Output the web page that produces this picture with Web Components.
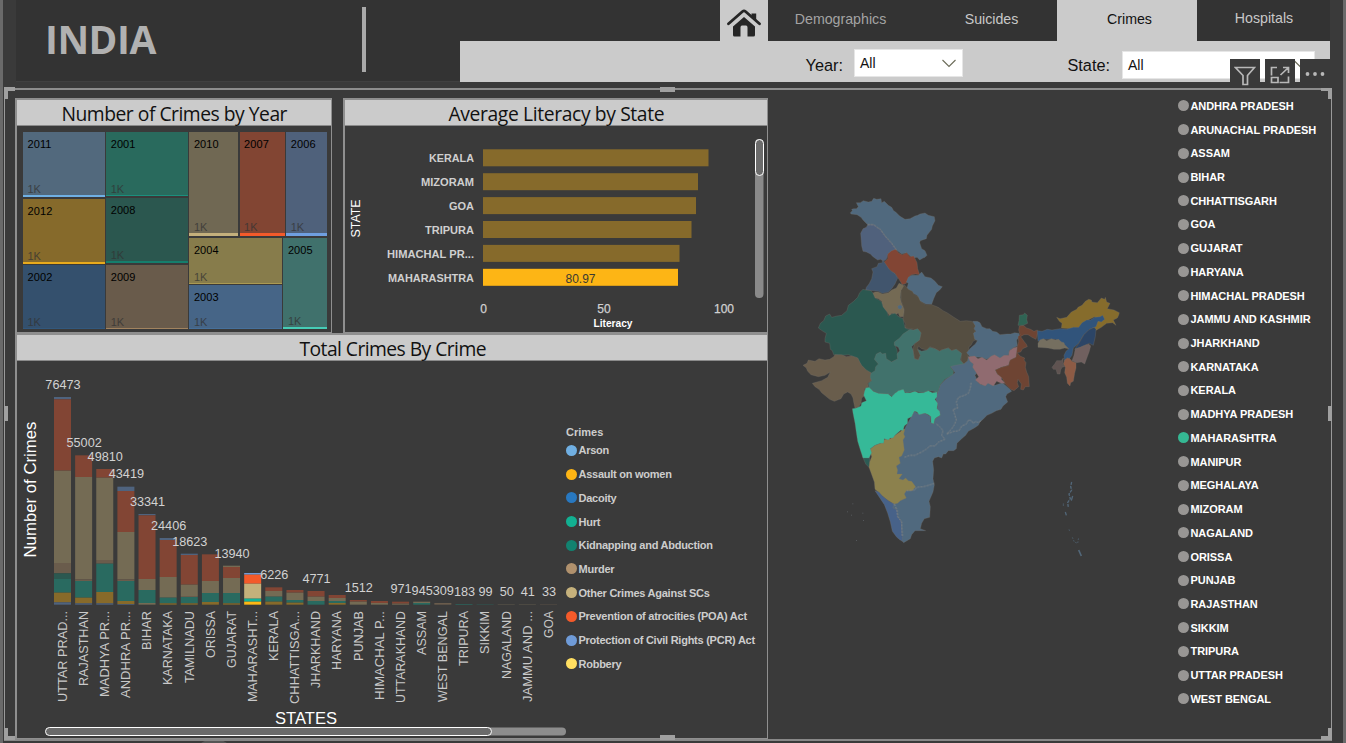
<!DOCTYPE html>
<html lang="en">
<head>
<meta charset="utf-8">
<title>India – Crimes</title>
<style>
html,body{margin:0;height:100%;background:#3a3a3a;overflow:hidden;font-family:"Liberation Sans",Arial,sans-serif}
</style>
</head>
<body>
<crime-dashboard></crime-dashboard>
<script>
const define = (name, html, setup) => customElements.define(name, class extends HTMLElement {
  connectedCallback() {
    if (this.shadowRoot) return;
    const root = this.attachShadow({ mode: 'open' });
    root.innerHTML = typeof html === 'function' ? html(this) : html;
    if (setup) setup(root, this);
  }
});

/* ---------- header ---------- */
define('nav-tab', `<style>
:host{display:flex;align-items:center;justify-content:center;height:41px;box-sizing:border-box;padding-bottom:3px;font-size:14.2px;color:#c8c8c8;background:#333;white-space:nowrap}
:host([dim]){color:#a3a3a3}
:host([home]){background:#cbcbcb;padding:5px 0 0}
:host([active]){background:#cbcbcb;color:#111}
</style><slot></slot>`);

define('drop-down', `<style>
:host{display:flex;align-items:center;justify-content:space-between;box-sizing:border-box;background:#fff;border:1px solid #e6e6e6;color:#111;font-size:14px;padding:0 6px 0 5px;height:28px}
</style><slot></slot><svg width="14" height="9" viewBox="0 0 14 9"><path d="M.5 1 7 7.5 13.500 1" fill="none" stroke="#6b6b58" stroke-width="1.1"/></svg>`);

define('top-bar', `<style>
:host{display:grid;grid-template-columns:444px 870px 1fr;height:82px;margin-left:13px;background:#333;border-bottom:1px solid #404040;box-sizing:border-box}
.brand{display:flex;align-items:flex-start}
.brand h1{margin:0;width:346px;padding:12px 0 0 29px;box-sizing:border-box;font:bold 39px/54px "Open Sans","Noto Sans",sans-serif;letter-spacing:-.5px;color:#b1b1b1}
.brand i{width:4px;height:65px;margin-top:7px;background:#a9a9a9}
.right{display:grid;grid-template-rows:41px 41px}
.tabs{display:grid;grid-template-columns:260px 48px 153px 136px 140px 133px}
.filters{background:#cbcbcb;display:flex;align-items:flex-start;font-size:16.3px;color:#111}
.filters span{margin-top:14px;line-height:20px;text-align:right}
.y{width:383px}.s{width:147px}
drop-down.a{width:109px;margin:8px 0 0 11px}
drop-down.b{width:193px;margin:9.500px 0 0 12px}
.side{background:#3a3a3a}
</style>
<div class="brand"><h1>INDIA</h1><i></i></div>
<div class="right">
 <div class="tabs"><span></span>
  <nav-tab home><svg width="34" height="28" viewBox="0 0 34 28"><path d="M24.500 4.500h4.700v7.200l-4.700-4.200z" fill="#262626"/><path d="M17 8 28 17.500V26q0 1.500-1.500 1.500H20.500V18.500q0-2-1.500-2h-4q-1.500 0-1.500 2v9H7.500Q6 27.500 6 26V17.500z" fill="#262626"/><path d="M1.500 14.800 15.500 2.500q1.500-1.200 3 0l14 12.300" fill="none" stroke="#262626" stroke-width="2.800" stroke-linecap="round" stroke-linejoin="round"/></svg></nav-tab>
  <nav-tab dim style="padding-right:8px">Demographics</nav-tab><nav-tab style="padding-left:5px">Suicides</nav-tab><nav-tab active style="padding-left:5px">Crimes</nav-tab><nav-tab style="padding:0 0 5px 1px">Hospitals</nav-tab>
 </div>
 <div class="filters"><span class="y">Year:</span><drop-down class="a">All</drop-down><span class="s">State:</span><drop-down class="b">All</drop-down></div>
</div><div class="side"></div>`);

define('visual-tools', `<style>
:host{position:absolute;left:1230px;top:59px;display:flex;gap:5px}
span{display:flex;align-items:center;justify-content:center;width:30px;height:29px;background:#3a3a3a}
.m{width:32px}
svg{fill:none;stroke:#b8b8b8;stroke-width:1.7}
</style>
<span><svg width="22" height="20" viewBox="0 0 22 20" style="margin-top:5px"><path d="M1.500 1.500h19l-7 8V18.500h-4.500V9.500z"/></svg></span>
<span><svg width="20" height="18" viewBox="0 0 20 18" style="margin-top:3px"><path d="M7 1.500H1.500v8M13 1.500h5.500v5.500M18 2 10.500 9M18.500 10.500v6H9.500M1.500 11.500h6.500v5h-6.500z"/></svg></span>
<span class="m"><svg width="20" height="6" viewBox="0 0 20 6" style="fill:#b8b8b8;stroke:none;margin-right:2px"><circle cx="2.500" cy="3" r="1.900"/><circle cx="10" cy="3" r="1.900"/><circle cx="17.500" cy="3" r="1.900"/></svg></span>`);

/* ---------- panels ---------- */
define('chart-panel', el => `<style>
:host{display:flex;flex-direction:column;box-sizing:border-box;border:solid #8f8f8f;border-width:2px 1px 1px 2px}
h2{margin:0;height:25px;flex:none;background:#cbcbcb;border-bottom:1px solid #8a8a8a;color:#111;font:400 19.500px/27px "Open Sans","Noto Sans",sans-serif;white-space:nowrap}
h2 svg{display:block;margin:auto;height:25px;overflow:visible}
</style><h2><svg width="${el.getAttribute('w')}"><text x="0.500" y="20.700" font-size="19.300" fill="#111" textLength="${el.getAttribute('w')}">${el.getAttribute('label')}</text></svg></h2><slot></slot>`);

define('tree-cell', el => `<style>
:host{display:flex;flex-direction:column;justify-content:space-between;box-sizing:border-box;padding:6px 0 0 4.500px;font-size:11px;line-height:12px;color:#000;background:${el.getAttribute('bg')};border-bottom:${el.getAttribute('b') || 1}px solid ${el.getAttribute('line')};flex:1 1 0;min-width:0;min-height:0;letter-spacing:.1px}
small{font-size:11px;color:#333;opacity:.75;letter-spacing:0}
</style><slot></slot><small>1K</small>`);

define('year-treemap', `<style>
:host{display:flex;gap:1.500px;padding:6px 2px 0 6px;height:197px}
.col,.row{display:flex;gap:1.500px;min-width:0;min-height:0}.col{flex-direction:column}
</style>
<div class="col" style="width:81.700px"><tree-cell bg="#52697d" line="#6fb0e4" b="2">2011</tree-cell><tree-cell bg="#866a2b" line="#e8aa1c" b="2">2012</tree-cell><tree-cell bg="#34506d" line="#32587d">2002</tree-cell></div>
<div class="col" style="width:81.700px"><tree-cell bg="#296a5d" line="#1b8f7d">2001</tree-cell><tree-cell bg="#2b574f" line="#157e6c" b="2">2008</tree-cell><tree-cell bg="#695b4b" line="#a1835f">2009</tree-cell></div>
<div class="col" style="width:138px"><div class="row" style="height:104px"><tree-cell bg="#706853" line="#c4b07c" b="3" style="flex:49.500">2010</tree-cell><tree-cell bg="#824533" line="#f45a2a" b="3" style="flex:45.500">2007</tree-cell><tree-cell bg="#4f617b" line="#6f9fe0" b="3" style="flex:41">2006</tree-cell></div>
<div class="row" style="flex:1"><div class="col" style="width:92.500px"><tree-cell bg="#877c4b" line="#ab9a52" style="flex:46">2004</tree-cell><tree-cell bg="#466587" line="#46709b" style="flex:43.500">2003</tree-cell></div><tree-cell bg="#40716c" line="#46ccb6" b="2">2005</tree-cell></div></div>`);

const F = 'font-family="Liberation Sans, Arial, sans-serif"';

define('literacy-chart', () => {
  const rows = [['KERALA', 225.500, 45], ['MIZORAM', 215, 53], ['GOA', 213, 25], ['TRIPURA', 208.500, 49], ['HIMACHAL PR...', 196.500, 87], ['MAHARASHTRA', 195, 86]];
  let s = '';
  rows.forEach(([n, w, tl], i) => {
    const y = 149.300 + i * 23.900, on = i === 5;
    s += `<rect x="483" y="${y}" width="${w}" height="17" fill="${on ? '#fdb515' : '#866a2b'}"/><text x="${474 - tl}" y="${y + 12.700}" textLength="${tl}" lengthAdjust="spacingAndGlyphs" font-size="11.500" font-weight="bold" fill="#cfcfcf">${n}</text>`;
  });
  return `<style>:host{display:block;height:205px}svg{display:block}</style><svg width="421" height="205" viewBox="345 126 421 205" ${F}>${s}
<text x="580.500" y="283.300" text-anchor="middle" font-size="12" fill="#3a3a32">80.97</text>
<g font-size="12" fill="#d0d0d0" stroke="#d0d0d0" stroke-width=".25" text-anchor="middle"><text x="483.500" y="313">0</text><text x="604" y="313">50</text><text x="724" y="313">100</text></g>
<text x="613" y="327" text-anchor="middle" font-size="11" font-weight="bold" fill="#fff" textLength="39" lengthAdjust="spacingAndGlyphs">Literacy</text>
<text transform="translate(359.500 218.500) rotate(-90)" text-anchor="middle" font-size="12" fill="#fff" textLength="38" lengthAdjust="spacingAndGlyphs">STATE</text>
<rect x="755" y="139" width="8.500" height="159" rx="4" fill="#8a8a8a"/><rect x="755.500" y="139.500" width="8" height="36" rx="4" fill="#6b6b6b" stroke="#fff"/></svg>`;
});

define('crimes-chart', () => {
  const C = { r: '#824534', k: '#746b54', n: '#6a5c4c', d: '#2b5850', t: '#296a60', g: '#876a2a', b: '#4f637e', B: '#6f9bd8', R: '#f45a2a', K: '#c4b17b', T: '#12b297', G: '#fdb714' };
  /* stacked segments: start offset, then colour key and end offset, in thirds of a pixel below y=360 */
  const bars = [
    ['UTTAR PRAD...', 111, 'b118 r332 k609 n640 d657 t698 g727 b734', '76473', 389, 91],
    ['RAJASTHAN', 286, 'r351 k658 n663 t713 g730 b734', '55002', 447, 75],
    ['MADHYA PR...', 327, 'r353 k600 n611 t696 g730 b734', '49810', 461, 86],
    ['ANDHRA PR...', 380, 'b393 r516 k658 n663 t723 g732 b734', '43419', 478, 87],
    ['BIHAR', 462, 'b466 r657 k690 t729 k734', '33341', 506, 39],
    ['KARNATAKA', 534, 'b540 r651 k713 t730 g734', '24406', 530, 74],
    ['TAMILNADU', 581, 'b585 r674 k708 n711 t730 g734', '18623', 546, 72],
    ['ORISSA', 583, 'r663 k699 t726 g734', '', 0, 47],
    ['GUJARAT', 617, 'k621 r654 k699 t730 g734', '13940', 558, 57],
    ['MAHARASHT...', 639, 'B644 R671 K716 T725 G734', '', 0, 91],
    ['KERALA', 682, 'r693 k710 t725 g734', '6226', 579, 50],
    ['CHHATTISGA...', 690, 'r698 k720 t728 g734', '', 0, 93],
    ['JHARKHAND', 693, 'r710 k723 t734', '4771', 583, 77],
    ['HARYANA', 705, 'r714 k723 t729 g734', '', 0, 59],
    ['PUNJAB', 720, 'r725 k734', '1512', 592, 50],
    ['HIMACHAL P...', 723, 'r729 k734', '', 0, 89],
    ['UTTARAKHAND', 725, 'r731 k734', '971', 593, 92],
    ['ASSAM', 725, 'k729 t734', '945', 594.500, 44],
    ['WEST BENGAL', 729, 'n734', '309', 595, 91],
    ['TRIPURA', 732, 't734', '183', 595.500, 55],
    ['SIKKIM', 733, 't734', '99', 596, 43],
    ['NAGALAND', 733, 'k734', '50', 596, 68],
    ['JAMMU AND ...', 733, 'k734', '41', 596, 91],
    ['GOA', 733, 'n734', '33', 596, 27]];
  let a = '', v = '', l = '';
  bars.forEach(([n, top, segs, val, vy, len], i) => {
    const x = 54 + i * 21.130;
    let y = top;
    segs.split(' ').forEach(q => {
      const e = +q.slice(1);
      a += `<rect x="${x}" y="${360 + y / 3}" width="17" height="${(e - y) / 3}" fill="${C[q[0]]}"/>`;
      y = e;
    });
    if (val) v += `<text x="${x + 9}" y="${vy}">${val}</text>`;
    l += `<text transform="translate(${x + 12.800} ${611 + len}) rotate(-90)" textLength="${len}" lengthAdjust="spacingAndGlyphs">${n}</text>`;
  });
  return `<style>:host{display:block}svg{display:block}</style><svg width="540" height="377" viewBox="17 361 540 377" overflow="visible" ${F}>${a}
<g font-size="12.700" fill="#d2d2d2" text-anchor="middle">${v}</g><g font-size="12.500" fill="#c9c9c9">${l}</g>
<text transform="translate(36 557.500) rotate(-90)" font-size="16.300" fill="#fff" textLength="136" lengthAdjust="spacingAndGlyphs">Number of Crimes</text>
<text x="306" y="723.500" text-anchor="middle" font-size="16.500" fill="#fff" textLength="62" lengthAdjust="spacingAndGlyphs">STATES</text>
<rect x="46" y="727.500" width="520" height="8" rx="4" fill="#8d8d8d"/><rect x="45.500" y="727.500" width="446" height="8" rx="4" fill="#6b6b6b" stroke="#fff"/></svg>`;
});

define('legend-item', el => `<style>
:host{display:flex;align-items:center;gap:1.500px;height:23.720px;white-space:nowrap;font:bold 11px/12px "Liberation Sans",Arial,sans-serif}
i{width:11px;height:11px;border-radius:50%;background:${el.getAttribute('c') || '#989694'};flex:none}
</style><i></i><slot></slot>`);

define('crime-legend', `<style>
:host{display:block;color:#cdcdcd;padding-top:65px}
b{display:block;font:bold 11px/12px "Liberation Sans",Arial,sans-serif;height:12.500px}
legend-item{letter-spacing:-.25px}
</style><b>Crimes</b>` + [['Arson', '#70afe2'], ['Assault on women', '#fdb515'], ['Dacoity', '#2878c0'], ['Hurt', '#12b092'], ['Kidnapping and Abduction', '#128270'], ['Murder', '#b0916d'], ['Other Crimes Against SCs', '#c5b17c'], ['Prevention of atrocities (POA) Act', '#f45a2a'], ['Protection of Civil Rights (PCR) Act', '#6f9bd8'], ['Robbery', '#ffdf62']].map(([n, c]) => `<legend-item c="${c}">${n}</legend-item>`).join(''));

define('state-list', `<style>:host{display:block;color:#fff;letter-spacing:-.07px}</style>` +
  'ANDHRA PRADESH,ARUNACHAL PRADESH,ASSAM,BIHAR,CHHATTISGARH,GOA,GUJARAT,HARYANA,HIMACHAL PRADESH,JAMMU AND KASHMIR,JHARKHAND,KARNATAKA,KERALA,MADHYA PRADESH,MAHARASHTRA,MANIPUR,MEGHALAYA,MIZORAM,NAGALAND,ORISSA,PUNJAB,RAJASTHAN,SIKKIM,TRIPURA,UTTAR PRADESH,WEST BENGAL'.split(',').map(n => `<legend-item${n === 'MAHARASHTRA' ? ' c="#35b893"' : ''}>${n}</legend-item>`).join(''));

/* ---------- map: polygons on a 3x grid, [fill, dx, dy, points] ---------- */
define('india-map', () => {
  const P = [
    ['#50697e', 0, 540, '358,124 372,132 390,130 408,140 406,156 416,162 420,146 436,136 424,122 428,110 422,84 428,66 436,44 452,28 480,8 474,0 466,-10 480,-20 506,-20 522,-38 540,-10 545,10 540,16 550,38 560,44 580,36 600,46 622,38 645,58 650,64 636,72 632,80 638,96 624,108 618,118 604,122 590,130 576,136 566,146 555,156 550,166 538,174 520,184 512,196 500,206 486,220 484,236 476,242 460,242 452,252 445,252 440,264 430,260 418,264 413,274 416,300 414,326 418,345 414,366 402,394 406,410 404,442 388,446 380,460 376,476 392,482 360,482 350,494 346,506 326,518 300,490 290,400 300,300 320,200 332,170'],
    ['#50697e', 0, 0, '166,68 172,62 170,58 176,56 184,56 190,50 184,38 196,38 205,32 220,36 230,34 236,25 245,28 258,26 260,38 268,34 280,46 290,52 296,62 302,66 314,78 330,88 345,86 360,78 368,76 375,72 390,69 400,76 418,80 420,92 412,108 410,118 396,136 394,146 376,152 374,158 380,176 390,182 396,196 390,202 384,204 374,210 366,202 356,204 345,198 335,188 320,192 304,180 278,192 218,104 204,90 198,82 186,74 168,72'],
    ['#50617c', 0, 0, '218,104 236,104 246,112 256,118 270,138 290,160 304,178 290,184 278,196 274,208 266,213 256,208 248,210 234,200 226,192 214,186 204,184 200,168 197,130 204,116 214,112'],
    ['#41556d', 0, 0, '262,210 270,218 278,226 284,240 300,250 308,264 300,282 290,296 280,306 262,310 250,304 234,302 212,300 214,292 222,282 230,266 234,246 230,236 246,230 250,220 262,218'],
    ['#824534', 0, 0, '290,182 302,178 312,190 322,194 335,188 341,196 345,200 356,198 360,206 366,218 368,236 374,254 362,252 350,254 342,260 334,280 322,284 312,268 300,250 290,244 280,234 268,216 278,206 278,192'],
    ['#50697e', 0, 0, '340,262 350,256 370,256 380,246 390,260 408,264 420,274 430,286 442,290 434,300 424,308 416,326 410,343 392,342 374,332 366,316 346,306 336,294 340,280 334,276'],
    ['#746a54', 0, 0, '312,280 322,284 330,290 318,302 316,322 318,334 322,344 328,358 326,380 314,380 310,370 300,374 290,370 286,380 276,366 264,356 260,334 250,326 240,324 232,310 240,306 250,306 262,312 280,308 290,300 304,294'],
    ['#50697e', 0, 0, '308,348 316,344 322,350 318,358 310,356'],
    ['#554e41', 0, 0, '328,284 340,298 352,304 358,314 370,320 376,334 392,344 410,344 430,352 444,362 456,368 480,384 496,394 514,392 530,394 540,402 548,412 540,422 540,436 550,440 546,448 534,454 528,466 522,470 520,490 518,512 506,522 498,514 500,490 484,478 470,482 460,474 440,480 434,484 420,476 404,470 396,480 380,476 370,468 368,478 376,496 370,510 358,506 354,480 358,462 372,450 378,430 368,420 345,416 330,414 332,402 324,388 328,360 318,330 318,302'],
    ['#2b5850', 0, 0, '204,298 212,300 228,302 234,310 240,324 252,330 260,336 264,350 276,366 280,378 290,372 300,370 306,376 314,382 324,386 330,414 345,420 320,440 298,460 306,480 310,508 290,516 278,550 228,570 214,550 200,530 188,504 160,494 140,496 116,494 112,482 106,478 104,460 90,456 90,446 94,430 84,424 70,414 76,400 86,392 92,378 104,372 110,382 126,378 140,376 156,362 160,346 176,334 188,322 194,308'],
    ['#695d4c', 0, 0, '24,526 36,520 40,510 60,514 72,506 90,510 104,508 116,500 120,494 140,494 154,500 170,498 188,504 194,516 200,526 214,540 228,548 226,562 230,572 218,580 220,592 208,596 212,614 200,624 198,640 190,652 180,654 176,636 174,624 168,612 158,606 146,612 138,626 118,634 104,628 92,618 80,608 72,598 60,590 52,580 66,576 80,572 98,562 106,546 90,556 70,560 48,554 38,544 34,534'],
    ['#41726c', 0, 0, '345,418 356,420 368,416 378,428 374,450 360,460 350,470 354,480 358,506 370,510 376,496 368,478 380,484 396,480 404,472 420,476 434,484 440,480 460,474 470,482 484,478 500,490 496,510 506,522 480,526 466,530 476,544 474,554 450,568 436,584 428,608 414,604 400,602 386,608 360,604 334,608 320,600 304,606 294,620 280,612 250,610 234,602 222,594 220,580 230,572 226,562 228,550 240,542 242,530 250,522 238,508 244,492 256,486 262,492 272,490 274,506 290,516 308,506 306,492 314,482 310,472 298,466 298,456 314,444 324,432'],
    ['#2c5b54', 0, 540, '202,258 224,258 224,294 212,282'],
    ['#8c814d', 0, 540, '224,238 240,226 256,220 270,208 286,206 300,196 318,184 322,176 330,178 326,192 330,200 324,210 328,240 320,258 312,262 316,280 304,288 308,300 306,312 322,312 312,326 324,330 332,324 340,332 350,334 362,350 352,362 334,362 328,372 334,384 316,392 308,400 298,402 280,392 262,378 250,366 240,358 238,336 228,308 222,292 224,276 230,260'],
    ['#36b998', 0, 540, '172,116 184,114 198,108 200,98 214,92 206,76 208,66 212,54 222,52 235,64 250,70 280,72 290,80 300,70 310,62 325,58 330,68 345,68 360,64 370,68 385,68 400,62 412,68 426,66 426,80 420,88 428,100 426,116 434,124 436,136 426,142 420,146 416,162 408,158 408,140 400,134 390,130 372,134 366,126 358,124 350,140 338,146 338,160 328,168 324,182 318,180 300,196 294,204 286,204 280,210 268,206 266,220 256,220 240,226 226,236 230,248 222,264 204,264 196,240 188,214 184,188 180,160 174,130'],
    ['#476289', 0, 540, '240,362 252,366 262,378 280,392 296,402 294,414 306,420 308,440 318,452 322,500 322,514 312,508 304,500 292,484 286,456 278,430 268,404 256,386'],
    ['#50697e', 495, 270, '38,124 52,124 60,128 66,140 80,146 90,146 98,154 110,156 120,164 140,162 152,162 164,158 176,160 180,168 170,180 172,198 160,204 148,212 146,226 120,236 100,228 80,238 60,232 30,230 20,218 32,204 46,192 52,182 44,178 40,160 48,154 42,146 46,138'],
    ['#906b70', 495, 270, '24,230 44,228 54,236 66,232 80,240 94,228 104,224 120,234 132,226 146,226 148,212 160,204 172,200 172,212 168,232 156,238 148,246 146,256 124,262 106,270 112,282 126,288 124,298 136,310 124,310 110,304 100,318 84,310 76,318 60,312 46,300 56,290 46,274 38,262 40,252 30,244'],
    ['#6e4433', 495, 270, '178,138 190,136 200,144 212,148 222,154 232,150 232,162 228,178 216,172 204,164 192,164 182,170 192,184 200,194 202,200 188,206 182,216 172,218 180,228 194,234 192,240 198,248 196,262 200,276 206,290 208,320 196,320 190,330 182,328 184,312 174,298 172,308 176,320 162,332 152,328 136,312 126,294 112,282 106,270 124,262 146,256 150,240 168,232 172,200 176,184 174,170 180,164 176,150'],
    ['#2f6454', 495, 270, '178,106 190,104 194,99 202,106 200,118 203,130 190,136 174,136 177,122'],
    ['#866c2c', 495, 270, '290,112 300,116 320,112 334,96 350,88 354,82 366,76 376,64 386,58 394,60 396,66 412,68 424,54 434,58 436,52 440,66 450,70 442,86 462,90 478,98 476,106 472,114 460,120 468,136 458,128 440,130 424,142 406,152 398,142 410,122 404,110 380,122 360,144 330,146 304,144 306,130 298,124'],
    ['#31547b', 495, 270, '232,152 246,154 262,148 276,150 300,146 320,148 340,142 356,142 366,128 380,120 392,120 404,112 420,110 428,106 434,118 424,126 414,124 408,140 388,148 370,166 356,190 340,204 336,226 328,236 320,234 314,242 312,226 318,214 326,206 304,186 286,178 250,178 234,184'],
    ['#756f60', 495, 270, '240,180 250,176 260,182 274,176 286,180 296,178 304,186 312,188 314,194 326,206 314,204 300,208 282,208 264,204 234,202 234,190'],
    ['#2c4566', 495, 270, '402,142 408,148 406,170 400,196 388,190 374,196 358,204 344,208 358,188 372,164 386,150'],
    ['#70605f', 495, 270, '346,206 360,202 374,196 386,192 392,198 388,214 382,230 374,252 364,246 350,248 336,242 342,226'],
    ['#8d5b45', 495, 270, '314,240 322,234 330,236 336,244 348,248 348,264 344,280 340,304 332,308 330,318 322,310 320,292 314,278 316,262 310,252'],
    ['#5f5351', 495, 270, '310,234 304,242 290,242 284,252 276,262 280,268 288,268 292,282 300,282 302,270 306,262 314,260 308,252']
  ];
  const L = '<polyline points="304,180 290,160 270,138 256,118 246,112 236,104 218,104"/>' +
    ['528,38 526,54 520,70 508,76 490,82 484,96 488,114 474,118 478,130 484,150 478,164 470,176 455,192', '455,192 476,184 492,182 500,168 514,162 520,150 530,152 534,160 542,154 550,158 560,150', '328,262 344,256 360,256 380,246 396,236 404,228 420,228 430,216 450,208 440,196 444,182 434,170 422,160', '334,362 360,360 364,352 385,350 400,346 418,340', '298,402 306,420 308,440 320,456 322,500'].map(p => `<polyline transform="translate(0 540)" points="${p}"/>`).join('');
  return `<style>:host{display:block}svg{display:block}</style><svg width="340" height="380" viewBox="0 0 1020 1140"><g stroke="#77736b" stroke-opacity=".6" stroke-width="1.500">${P.map(([f, x, y, p]) => `<polygon fill="${f}" transform="translate(${x} ${y})" points="${p}"/>`).join('')}</g>
<g fill="none" stroke="#8a8a88" stroke-width="2.600" stroke-dasharray="7 2.500" opacity=".9">${L}</g>
<g transform="translate(675 630)" fill="none" stroke="#526779" stroke-width="4"><path d="M155 246l-3 14 3 10-8 12 4 14-8 12 2 14" stroke-dasharray="9 3"/><path d="M158 288l-4 14M136 336l3 10" /><path d="M147 388l2 6M157 412l6 14 10 4 3-18" stroke-width="2" stroke-dasharray="5 4"/><path d="M176 450l8 18" stroke-width="5"/><path d="M130 310v8" stroke-width="2"/></g>
<g fill="#55585c"><rect x="172" y="940" width="3" height="3"/><rect x="156" y="964" width="3" height="3"/><rect x="168" y="974" width="3" height="3"/><rect x="202" y="968" width="3" height="3"/><rect x="204" y="990" width="3" height="3"/><rect x="183" y="1050" width="3" height="3"/></g></svg>`;
});

/* ---------- selection frame with resize handles ---------- */
define('selection-frame', `<style>
:host{display:block;position:relative;box-sizing:border-box;margin:6px 0 0 1px;width:1328px;height:653px;border:1px solid #9a9a9a;border-top:2px solid #8d8d8d;border-bottom:2px solid #888}
i{position:absolute;background:#a0a0a0}
.c{width:11px;height:4px}.v{width:4px;height:12px}
</style><slot></slot>
<i class="c" style="left:-1px;top:-3px"></i><i class="v" style="left:-1px;top:-3px"></i>
<i class="c" style="right:-1px;top:-3px"></i><i class="v" style="right:-1px;top:-3px"></i>
<i class="c" style="left:-1px;bottom:-1px"></i><i class="v" style="left:-1px;bottom:-1px"></i>
<i class="c" style="right:-1px;bottom:-1px"></i><i class="v" style="right:-1px;bottom:-1px"></i>
<i style="left:655px;top:-3px;width:15px;height:5px"></i><i style="left:655px;bottom:-1px;width:15px;height:5px"></i>
<i style="left:-1px;top:316px;width:4px;height:15px"></i><i style="right:-1px;top:316px;width:4px;height:15px"></i>`);

define('crime-dashboard', `<style>
:host{display:block;position:relative;box-sizing:border-box;width:1346px;height:743px;overflow:hidden;background:#3a3a3a;border-left:3px solid #6a6a6a;border-right:3px solid #6a6a6a}
visual-tools{margin-left:-3px}
.body{display:grid;grid-template-columns:753px 402px 1fr;padding:8px 0 0 10px;height:641px;box-sizing:border-box}
.left{display:grid;grid-template-rows:235px 406px;grid-template-columns:317px 425px;column-gap:11px}
.wide{grid-column:1/3}
.inner{display:flex;height:377px}
.inner crime-legend{margin-left:9px}
india-map{margin:92px 0 0 27px}
state-list{margin:-4px 0 0 8px}
.dot{position:absolute;left:195px;top:739px;width:32px;height:20px;border-radius:50%;background:#555}
</style>
<top-bar></top-bar>
<div class="dot"></div>
<selection-frame><div class="body">
 <div class="left">
  <chart-panel label="Number of Crimes by Year" w="226"><year-treemap></year-treemap></chart-panel>
  <chart-panel label="Average Literacy by State" w="216"><literacy-chart></literacy-chart></chart-panel>
  <chart-panel class="wide" label="Total Crimes By Crime" w="187"><div class="inner"><crimes-chart></crimes-chart><crime-legend></crime-legend></div></chart-panel>
 </div>
 <india-map></india-map>
 <state-list></state-list>
</div></selection-frame>
<visual-tools></visual-tools>`);
</script>
</body>
</html>
